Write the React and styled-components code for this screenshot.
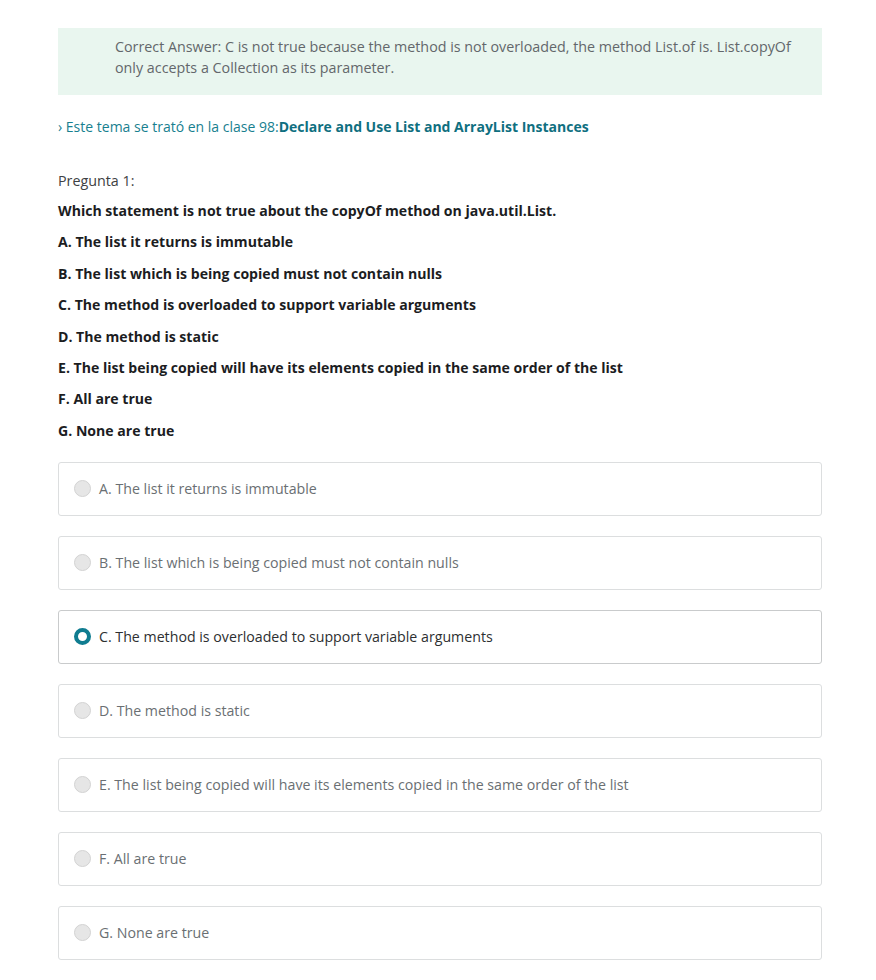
import React from "react";
import styled, { createGlobalStyle } from "styled-components";

const Global = createGlobalStyle`
  html, body { margin: 0; padding: 0; background: #fff; }
  body { font-family: "Open Sans", "Noto Sans", sans-serif; color: #2d2f31; }
`;

const Page = styled.div`
  padding: 28px 54px 20px 58px;
`;

const Explanation = styled.div`
  background: #e9f6ef;
  padding: 8px 20px 17px 57px;
  font-size: 14.3px;
  line-height: 21px;
  color: #63676b;
`;

const TopicLine = styled.div`
  margin-top: 21px;
  font-size: 14px;
  line-height: 22px;
  color: #17808f;
`;

const TopicLink = styled.a`
  font-weight: 700;
  color: #0f6f80;
  text-decoration: none;
`;

const Label = styled.div`
  margin-top: 32px;
  font-size: 14.3px;
  line-height: 22px;
  color: #3e4143;
`;

const Statement = styled.div`
  margin-top: ${(p) => (p.$first ? "8px" : "9.4px")};
  font-size: 14.1px;
  font-weight: 700;
  line-height: 22px;
  color: #1c1d1f;
`;

const Options = styled.div`
  display: flex;
  flex-direction: column;
  gap: 20px;
  margin-top: 20px;
`;

const Option = styled.label`
  display: flex;
  align-items: center;
  gap: 8px;
  height: 54px;
  box-sizing: border-box;
  padding: 0 15px;
  border: 1px solid ${(p) => (p.$selected ? "#c9cbcc" : "#dcdedf")};
  border-radius: 3px;
  font-size: 14.2px;
  color: ${(p) => (p.$selected ? "#2d2f31" : "#6a6f73")};
`;

const Radio = styled.span`
  width: 17px;
  height: 17px;
  box-sizing: border-box;
  border-radius: 50%;
  flex: none;
  background: ${(p) => (p.$selected ? "#fff" : "#e6e6e6")};
  border: ${(p) => (p.$selected ? "4.5px solid #0f7c90" : "1px solid #d3d3d3")};
`;

const statements = [
  "A. The list it returns is immutable",
  "B. The list which is being copied must not contain nulls",
  "C. The method is overloaded to support variable arguments",
  "D. The method is static",
  "E. The list being copied will have its elements copied in the same order of the list",
  "F. All are true",
  "G. None are true",
];

export default function App() {
  return (
    <>
      <Global />
      <Page>
        <Explanation>
          Correct Answer: C is not true because the method is not overloaded, the method List.of is. List.copyOf only accepts a Collection as its parameter.
        </Explanation>
        <TopicLine>
          › Este tema se trató en la clase 98:<TopicLink href="#">Declare and Use List and ArrayList Instances</TopicLink>
        </TopicLine>
        <Label>Pregunta 1:</Label>
        <Statement $first>Which statement is not true about the copyOf method on java.util.List.</Statement>
        {statements.map((s) => (
          <Statement key={s}>{s}</Statement>
        ))}
        <Options>
          {statements.map((s, i) => (
            <Option key={s} $selected={i === 2}>
              <Radio $selected={i === 2} />
              {s}
            </Option>
          ))}
        </Options>
      </Page>
    </>
  );
}
